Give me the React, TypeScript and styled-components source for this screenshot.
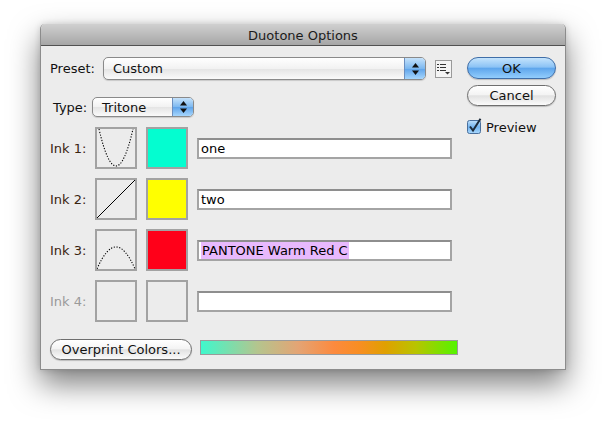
import React from "react";
import styled, { createGlobalStyle } from "styled-components";

const GlobalStyle = createGlobalStyle`
  html, body {
    margin: 0;
    padding: 0;
    background: #ffffff;
  }
  body {
    font-family: "DejaVu Sans", "Liberation Sans", sans-serif;
    font-size: 13px;
    color: #1a1a1a;
  }
`;

type Ink = {
  label: string;
  curve: "up" | "line" | "cap" | null;
  color: string | null;
  name: string;
  selected?: boolean;
};

const inks: Ink[] = [
  { label: "Ink 1:", curve: "up", color: "#04fdd0", name: "one" },
  { label: "Ink 2:", curve: "line", color: "#ffff00", name: "two" },
  { label: "Ink 3:", curve: "cap", color: "#ff0019", name: "PANTONE Warm Red C", selected: true },
  { label: "Ink 4:", curve: null, color: null, name: "" },
];

function App() {
  return (
    <>
      <GlobalStyle />
      <Page>
        <Dialog>
          <TitleBar>Duotone Options</TitleBar>
          <Body>
            <Main>
              <PresetRow>
                <Label>Preset:</Label>
                <Select $width={323} $height={23}>
                  <SelectText>Custom</SelectText>
                  <Stepper />
                </Select>
                <MenuIcon />
              </PresetRow>

              <TypeRow>
                <Label>Type:</Label>
                <Select $width={102} $height={20}>
                  <SelectText>Tritone</SelectText>
                  <Stepper />
                </Select>
              </TypeRow>

              <InkList>
                {inks.map((ink) => (
                  <InkRow key={ink.label}>
                    <InkLabel $disabled={!ink.color}>{ink.label}</InkLabel>
                    <Swatch>{ink.curve && <Curve kind={ink.curve} />}</Swatch>
                    <Swatch $color={ink.color} />
                    <Field>
                      {ink.selected ? <Selected>{ink.name}</Selected> : ink.name}
                    </Field>
                  </InkRow>
                ))}
              </InkList>

              <Footer>
                <PillButton $width={142}>Overprint Colors...</PillButton>
                <GradientBar />
              </Footer>
            </Main>

            <Side>
              <PillButton $primary $width={89} $height={22}>
                OK
              </PillButton>
              <PillButton $width={89}>Cancel</PillButton>
              <CheckRow>
                <CheckBox />
                Preview
              </CheckRow>
            </Side>
          </Body>
        </Dialog>
      </Page>
    </>
  );
}

function Curve({ kind }: { kind: "up" | "line" | "cap" }) {
  if (kind === "line") {
    return (
      <svg width="38" height="38" viewBox="0 0 38 38">
        <line x1="0" y1="38" x2="38" y2="0" stroke="#000" strokeWidth="1" />
      </svg>
    );
  }
  // dotted transfer curves: a U for ink 1, an arch for ink 3
  const d = kind === "up" ? "M2 0 Q19 74 36 0" : "M0 38 Q19 -6 38 38";
  return (
    <svg width="38" height="38" viewBox="0 0 38 38">
      <path d={d} fill="none" stroke="#000" strokeWidth="1.1" strokeDasharray="1.2 1.6" />
    </svg>
  );
}

function Stepper() {
  return (
    <StepperBox>
      <svg width="7" height="12" viewBox="0 0 7 12">
        <path d="M3.5 0 L7 4.5 L0 4.5 Z" fill="#111" />
        <path d="M3.5 12 L7 7.5 L0 7.5 Z" fill="#111" />
      </svg>
    </StepperBox>
  );
}

function MenuIcon() {
  return (
    <IconBox>
      <svg width="13" height="12" viewBox="0 0 13 12">
        <rect x="0" y="1" width="2" height="1" fill="#333" />
        <rect x="3" y="1" width="6" height="1" fill="#333" />
        <rect x="0" y="4" width="2" height="1" fill="#333" />
        <rect x="3" y="4" width="6" height="1" fill="#333" />
        <rect x="0" y="7" width="2" height="1" fill="#333" />
        <rect x="3" y="7" width="6" height="1" fill="#333" />
        <path d="M8 9 L13 9 L10.5 11.5 Z" fill="#333" />
      </svg>
    </IconBox>
  );
}

function CheckBox() {
  return (
    <CheckWrap>
      <svg width="16" height="17" viewBox="0 0 16 17">
        <defs>
          <linearGradient id="cb" x1="0" y1="0" x2="0" y2="1">
            <stop offset="0" stopColor="#bfe0fb" />
            <stop offset="0.5" stopColor="#72b3ef" />
            <stop offset="1" stopColor="#a9d8fd" />
          </linearGradient>
        </defs>
        <rect x="0.5" y="2.5" width="13" height="13" rx="2" fill="url(#cb)" stroke="#4a6f9c" />
        <path d="M3 8.5 L6 12.5 L13.5 0.8" fill="none" stroke="#1c2a3a" strokeWidth="2" />
      </svg>
    </CheckWrap>
  );
}

const Page = styled.div`
  padding: 24px 0 0 40px;
  height: 424px;
  box-sizing: border-box;
`;

const Dialog = styled.div`
  width: 526px;
  background: #ececec;
  border: 1px solid #8c8c8c;
  border-top: none;
  border-radius: 5px 5px 0 0;
  box-sizing: border-box;
  box-shadow: 0 14px 30px rgba(0, 0, 0, 0.5), 0 0 6px rgba(0, 0, 0, 0.15);
`;

const TitleBar = styled.div`
  height: 22px;
  border-radius: 5px 5px 0 0;
  background: linear-gradient(#d0d0d0, #a6a6a6);
  border-bottom: 1px solid #515151;
  box-sizing: border-box;
  display: flex;
  align-items: center;
  justify-content: center;
  font-size: 13px;
  color: #1c1c1c;
  padding-top: 1px;
`;

const Body = styled.div`
  display: flex;
  gap: 9px;
  padding: 11px 9px 9px 9px;
`;

const Main = styled.div`
  width: 408px;
  display: flex;
  flex-direction: column;
`;

const Side = styled.div`
  width: 89px;
  display: flex;
  flex-direction: column;
  gap: 6px;
`;

const PresetRow = styled.div`
  display: flex;
  align-items: center;
  height: 23px;
`;

const Label = styled.span`
  color: #111;
  margin-right: 6px;
  white-space: nowrap;
  ${PresetRow} & {
    width: 47px;
  }
`;

const TypeRow = styled.div`
  display: flex;
  align-items: center;
  height: 20px;
  margin-top: 17px;
  padding-left: 3px;
  ${Label} {
    width: 33px;
  }
`;

const Select = styled.div<{ $width: number; $height: number }>`
  width: ${(p) => p.$width}px;
  height: ${(p) => p.$height}px;
  box-sizing: border-box;
  display: flex;
  align-items: stretch;
  border: 1px solid #8a8a8a;
  border-radius: 5px;
  overflow: hidden;
  background: linear-gradient(#ffffff, #f2f2f2 50%, #e4e4e4 51%, #fafafa);
  box-shadow: 0 1px 1px rgba(0, 0, 0, 0.15);
`;

const SelectText = styled.span`
  flex: 1;
  display: flex;
  align-items: center;
  padding-left: 9px;
  color: #111;
`;

const StepperBox = styled.span`
  width: 20px;
  display: flex;
  align-items: center;
  justify-content: center;
  border-left: 1px solid #6b8fc0;
  background: linear-gradient(#c5e2fb, #7cb8f0 50%, #5ea3ea 51%, #a6d6fd);
`;

const IconBox = styled.span`
  width: 17px;
  height: 18px;
  margin-left: 9px;
  box-sizing: border-box;
  border: 1px solid #9a9a9a;
  background: #f4f4f4;
  display: flex;
  align-items: center;
  justify-content: center;
`;

const InkList = styled.div`
  display: flex;
  flex-direction: column;
  gap: 9px;
  margin-top: 10px;
`;

const InkRow = styled.div`
  display: flex;
  align-items: center;
  gap: 9px;
  height: 42px;
`;

const InkLabel = styled.span<{ $disabled?: boolean }>`
  width: 36px;
  color: ${(p) => (p.$disabled ? "#9a9a9a" : "#3a2410")};
  white-space: nowrap;
`;

const Swatch = styled.div<{ $color?: string | null }>`
  width: 42px;
  height: 42px;
  box-sizing: border-box;
  border: 2px solid #a2a2a2;
  background: ${(p) => p.$color || "#ececec"};
  display: flex;
  overflow: hidden;
`;

const Field = styled.div`
  width: 255px;
  height: 21px;
  box-sizing: border-box;
  border: 2px solid #a4a4a4;
  border-top-color: #8e8e8e;
  background: #fff;
  padding-left: 2px;
  display: flex;
  align-items: center;
  color: #000;
  white-space: nowrap;
  overflow: hidden;
`;

const Selected = styled.span`
  background: #e8b9fd;
  padding: 1px 1px 1px 1px;
  line-height: 17px;
`;

const Footer = styled.div`
  display: flex;
  align-items: flex-start;
  gap: 8px;
  margin-top: 17px;
`;

const PillButton = styled.div<{ $primary?: boolean; $width: number; $height?: number }>`
  width: ${(p) => p.$width}px;
  height: ${(p) => p.$height || 21}px;
  box-sizing: border-box;
  border-radius: 11px;
  display: flex;
  align-items: center;
  justify-content: center;
  color: #111;
  border: 1px solid ${(p) => (p.$primary ? "#3f6ea8" : "#6e6e6e")};
  background: ${(p) =>
    p.$primary
      ? "linear-gradient(#c4e3fc, #8cc3f5 45%, #5fa6ec 52%, #92cdfc)"
      : "linear-gradient(#ffffff, #f4f4f4 45%, #e2e2e2 52%, #fbfbfb)"};
  box-shadow: 0 1px 1px rgba(0, 0, 0, 0.2);
`;

const GradientBar = styled.div`
  width: 258px;
  height: 15px;
  margin-top: 1px;
  box-sizing: border-box;
  border: 1px solid #9a9a9a;
  background: linear-gradient(
    90deg,
    #3ff8cc 0%,
    #b4c58e 22%,
    #e4a474 38%,
    #fc8a3e 52%,
    #f88e22 62%,
    #e0a000 72%,
    #b8c400 84%,
    #54f400 100%
  );
`;

const CheckRow = styled.div`
  display: flex;
  align-items: center;
  gap: 3px;
  margin-top: 8px;
  color: #111;
`;

const CheckWrap = styled.span`
  display: flex;
  margin-top: -3px;
`;

export default App;
